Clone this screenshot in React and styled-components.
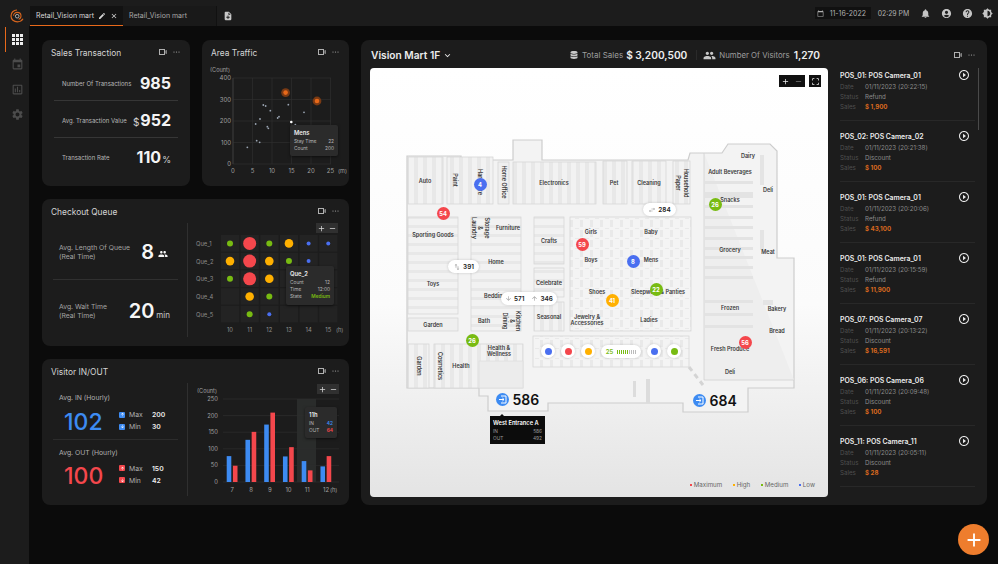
import React from "react";
import styled, { createGlobalStyle } from "styled-components";
import {
  MdAdd, MdRemove, MdClose, MdEdit, MdNoteAdd, MdEvent, MdOutlineAssessment, MdSettings,
  MdNotifications, MdAccountCircle, MdHelp, MdBrightness6, MdGroup, MdPlayCircleOutline,
  MdCropFree, MdKeyboardArrowDown, MdCalendarToday, MdArrowUpward, MdArrowDownward,
  MdSwapVert, MdSwapHoriz,
} from "react-icons/md";
import { FaDatabase } from "react-icons/fa";

const GlobalStyle = createGlobalStyle`
  html, body { margin: 0; padding: 0; background: #0b0b0b; }
  body { font-family: Inter, "Liberation Sans", sans-serif; color: #e8e8e8; overflow: hidden; }
`;

const ORANGE = "#e8691a";
const RED = "#f4474c";
const YELLOW = "#ffb000";
const GREEN = "#78bb12";
const BLUE = "#4a6ff0";
const SKY = "#3d8bf2";

/* ---------- shell ---------- */
const Page = styled.div`
  width: 998px;
  height: 564px;
  display: grid;
  grid-template-rows: 26px 1fr;
  grid-template-columns: 29px 1fr;
  position: relative;
  overflow: hidden;
`;

const TopBar = styled.header`
  grid-column: 1 / 3;
  background: #1c1c1c;
  display: flex;
  align-items: flex-end;
  padding-left: 10px;
`;

const LogoSlot = styled.div`
  width: 20px;
  height: 21px;
  display: flex;
  align-items: center;
`;

const Tab = styled.div`
  width: 93px;
  height: 20px;
  box-sizing: border-box;
  padding-left: 6px;
  display: flex;
  align-items: center;
  gap: 4px;
  font-size: 7px;
  color: ${(p) => (p.$active ? "#d8d8d8" : "#a8a8a8")};
  background: ${(p) => (p.$active ? "#121212" : "#191919")};
  border-bottom: 1px solid ${(p) => (p.$active ? ORANGE : "transparent")};
`;

const TabAdd = styled.div`
  width: 22px;
  height: 20px;
  border-left: 1px solid #111;
  display: flex;
  align-items: center;
  justify-content: center;
  color: #c8c8c8;
`;

const TopRight = styled.div`
  margin-left: auto;
  height: 26px;
  display: flex;
  align-items: center;
  color: #c4c4c4;
`;

const DateBox = styled.div`
  background: #111;
  height: 12px;
  width: 56px;
  display: flex;
  align-items: center;
  gap: 6px;
  padding-left: 2px;
  box-sizing: border-box;
  font-size: 7px;
  color: #b0b0b0;
  margin-right: 7px;
`;

const TimeText = styled.span`
  width: 31px;
  font-size: 6.9px;
  color: #b0b0b0;
  margin-right: 7px;
  white-space: nowrap;
`;

const TopIcon = styled.span`
  width: 20.6px;
  display: flex;
  justify-content: center;
`;

const SideBar = styled.nav`
  background: #1c1c1c;
  display: flex;
  flex-direction: column;
  padding-top: 1px;
`;

const SideItem = styled.div`
  width: 29px;
  height: 25px;
  box-sizing: border-box;
  padding-left: 6px;
  display: flex;
  align-items: center;
  justify-content: center;
  color: ${(p) => (p.$active ? "#e8e8e8" : "#4c4c4c")};
  position: relative;
  &::before {
    content: "";
    display: ${(p) => (p.$active ? "block" : "none")};
    position: absolute;
    left: 5px;
    top: 0;
    bottom: 0;
    width: 1px;
    background: ${ORANGE};
  }
`;

const Main = styled.main`
  display: grid;
  grid-template-columns: 307px 626px;
  gap: 12px;
  padding: 14px 0 0 13px;
  align-content: start;
`;

const LeftColumn = styled.div`
  display: grid;
  grid-template-rows: 146px 147px 146px;
  row-gap: 13px;
`;

const TopCards = styled.div`
  display: grid;
  grid-template-columns: 148px 147px;
  gap: 12px;
`;

const Card = styled.section`
  background: #1c1c1c;
  border-radius: 8px;
  min-width: 0;
  display: flex;
  flex-direction: column;
`;

const CardHead = styled.div`
  height: 24px;
  flex: none;
  box-sizing: border-box;
  padding: 1px 9px 0;
  display: flex;
  align-items: center;
  justify-content: space-between;
`;

const CardTitle = styled.h3`
  margin: 0;
  font-size: 8.4px;
  font-weight: 400;
  color: #d4d4d4;
`;

const CardTools = styled.div`
  display: flex;
  align-items: center;
  gap: 6px;
  margin: -1px 1px 0 0;
  color: #a8a8a8;
`;

const CamIcon = () => (
  <svg width="8" height="6" viewBox="0 0 8 6" fill="none">
    <rect x="0.5" y="0.5" width="5" height="5" stroke="#b0b0b0" />
    <path d="M6.5 1.5 L7.7 1 V5 L6.5 4.5 Z" fill="#b0b0b0" />
  </svg>
);

const Dots = () => (
  <svg width="7" height="2" viewBox="0 0 7 2">
    <circle cx="1" cy="1" r="0.6" fill="#b0b0b0" />
    <circle cx="3.5" cy="1" r="0.6" fill="#b0b0b0" />
    <circle cx="6" cy="1" r="0.6" fill="#b0b0b0" />
  </svg>
);

const Tools = () => (
  <CardTools>
    <CamIcon />
    <Dots />
  </CardTools>
);

/* ---------- sales transaction ---------- */
const SalesRow = styled.div`
  height: 37px;
  box-sizing: border-box;
  margin: 0 12px;
  padding: 2px 7px 0 8px;
  display: flex;
  align-items: center;
  justify-content: space-between;
  border-bottom: 1px solid ${(p) => (p.$last ? "transparent" : "#363636")};
`;

const SalesLabel = styled.span`
  font-size: 6px;
  color: #b8b8b8;
`;

const SalesValue = styled.span`
  font-size: 16px;
  font-weight: 700;
  color: #f4f4f4;
  display: flex;
  align-items: baseline;
  gap: 1px;
`;

const SalesUnit = styled.span`
  font-size: ${(p) => p.$size || 10}px;
  font-weight: 400;
  color: #d0d0d0;
`;

/* ---------- charts ---------- */
const ChartBox = styled.div`
  position: relative;
  flex: 1;
  min-height: 0;
  svg.chart { display: block; }
  svg.chart text { font-family: Inter, "Liberation Sans", sans-serif; }
`;

const Tip = styled.div`
  position: absolute;
  left: ${(p) => p.$x}px;
  top: ${(p) => p.$y}px;
  width: ${(p) => p.$w}px;
  box-sizing: border-box;
  padding: 4px;
  background: #2b2b2b;
  border-radius: 2px;
  box-shadow: 0 1px 3px rgba(0, 0, 0, 0.5);
`;

const TipTitle = styled.div`
  font-size: 5.8px;
  font-weight: 600;
  color: #eee;
  margin-bottom: 2px;
`;

const TipRow = styled.div`
  display: flex;
  justify-content: space-between;
  font-size: 4.8px;
  line-height: 7.2px;
  color: #b8b8b8;
`;

const TipValue = styled.span`
  color: ${(p) => p.$color || "#b8b8b8"};
  font-weight: ${(p) => (p.$color ? 600 : 400)};
`;

const ZoomCtl = styled.div`
  position: absolute;
  left: ${(p) => p.$x}px;
  top: ${(p) => p.$y}px;
  width: 22px;
  height: 10px;
  background: #303030;
  display: flex;
  align-items: center;
  justify-content: space-around;
  color: #d8d8d8;
`;

const AreaChart = () => {
  const pts = [
    [742, 442], [770, 422], [779, 427], [767, 372], [780, 357], [802, 380], [805, 385], [790, 315],
    [797, 318], [811, 332], [833, 354], [837, 350], [865, 314], [912, 337], [886, 374],
  ];
  const xs = [0, 5, 10, 15, 20, 25];
  const ys = [0, 100, 200, 300, 400];
  const px = (v) => 233 + (v / 25) * 97.5;
  const py = (v) => 164 - (v / 400) * 86;
  return (
    <ChartBox>
      <svg className="chart" width="147" height="122" viewBox="202 64 147 122">
        {xs.map((v) => (
          <line key={v} x1={px(v)} x2={px(v)} y1="78" y2="164" stroke="#2e2e2e" strokeWidth="0.7" />
        ))}
        {ys.map((v) => (
          <line key={v} x1="233" x2="331" y1={py(v)} y2={py(v)} stroke="#2e2e2e" strokeWidth="0.7" />
        ))}
        <line x1="233" x2="233" y1="78" y2="164" stroke="#444" strokeWidth="0.7" />
        {ys.map((v) => (
          <text key={v} x="231" y={py(v) + 2} fontSize="6" fill="#a0a0a0" textAnchor="end">{v}</text>
        ))}
        {xs.map((v) => (
          <text key={v} x={px(v)} y="172.5" fontSize="6" fill="#a0a0a0" textAnchor="middle">{v}</text>
        ))}
        <text x="338" y="172.5" fontSize="5.6" fill="#a0a0a0">(m)</text>
        <text x="210" y="72" fontSize="5.6" fill="#a0a0a0">(Count)</text>
        {pts.map(([x, y], i) => (
          <circle key={i} cx={x / 3} cy={y / 3} r="0.9" fill="#9aa4b2" />
        ))}
        <circle cx="291.3" cy="122" r="1.3" fill="#fff" />
        <circle cx="285.6" cy="92.6" r="4.4" fill="#7a3a14" />
        <circle cx="285.6" cy="92.6" r="2.3" fill={ORANGE} />
        <circle cx="317" cy="101" r="4.4" fill="#7a3a14" />
        <circle cx="317" cy="101" r="2.3" fill={ORANGE} />
      </svg>
      <Tip $x={88} $y={61} $w={48}>
        <TipTitle>Mens</TipTitle>
        <TipRow><span>Stay Time</span><TipValue>22</TipValue></TipRow>
        <TipRow><span>Count</span><TipValue>200</TipValue></TipRow>
      </Tip>
    </ChartBox>
  );
};

const HEAT = [
  [["g", 3], ["r", 6.5], ["g", 3], ["y", 4.3], ["b", 2], ["b", 2]],
  [["y", 4.3], ["r", 6.5], ["y", 4.3], ["g", 3], ["b", 2], null],
  [["g", 3], ["r", 6.5], ["y", 4.3], null, null, null],
  [null, ["y", 4.3], ["g", 3], null, null, null],
  [null, ["g", 3], ["b", 2], null, null, null],
];
const HEAT_COL = { g: GREEN, r: RED, y: YELLOW, b: BLUE };

const HeatChart = () => (
  <ChartBox>
    <svg className="chart" width="160" height="113" viewBox="189 224 160 113">
      {HEAT.map((row, r) => (
        <g key={r}>
          <text x="197" y={247 + r * 17.7} fontSize="5.8" fill="#8c8c8c">Que_{r + 1}</text>
          {row.map((cell, c) => {
            const x = 222 + c * 19.65;
            const y = 236 + r * 17.7;
            return (
              <g key={c}>
                <rect x={x} y={y} width="18.2" height="16.6" fill="#232323" />
                {cell && <circle cx={x + 9} cy={y + 8.4} r={cell[1]} fill={HEAT_COL[cell[0]]} />}
              </g>
            );
          })}
        </g>
      ))}
      {[10, 11, 12, 13, 14, 15].map((h, i) => (
        <text key={h} x={231 + i * 19.65} y="332.5" fontSize="5.8" fill="#909090" textAnchor="middle">{h}</text>
      ))}
      <text x="337" y="332.5" fontSize="5.6" fill="#909090">(h)</text>
    </svg>
    <ZoomCtl $x={128} $y={0}>
      <MdAdd size={9} />
      <MdRemove size={9} />
    </ZoomCtl>
    <Tip $x={98} $y={43} $w={48}>
      <TipTitle>Que_2</TipTitle>
      <TipRow><span>Count</span><TipValue>12</TipValue></TipRow>
      <TipRow><span>Time</span><TipValue>12:00</TipValue></TipRow>
      <TipRow><span>State</span><TipValue $color={GREEN}>Medium</TipValue></TipRow>
    </Tip>
  </ChartBox>
);

const VISITS = [
  { h: 7, i: 78, o: 49 }, { h: 8, i: 127, o: 151 }, { h: 9, i: 173, o: 209 },
  { h: 10, i: 77, o: 105 }, { h: 11, i: 63, o: 35 }, { h: 12, i: 47, o: 78 },
];

const BarChart = () => {
  const base = 482;
  const k = 83 / 250;
  return (
    <ChartBox>
      <svg className="chart" width="160" height="114" viewBox="189 383 160 114">
        <rect x="298" y="399" width="19" height="83" fill="#2a2c2b" />
        {[0, 50, 100, 150, 200, 250].map((v) => (
          <g key={v}>
            <line x1="224" x2="340" y1={base - v * k} y2={base - v * k} stroke="#2e2e2e" strokeWidth="0.7" />
            <text x="219" y={base - v * k + 2} fontSize="5.8" fill="#a0a0a0" textAnchor="end">{v}</text>
          </g>
        ))}
        {VISITS.map((d, n) => {
          const cx = 233.3 + n * 18.75;
          return (
            <g key={d.h}>
              <rect x={cx - 5.6} y={base - d.i * k} width="4.6" height={d.i * k} fill={SKY} />
              <rect x={cx + 0.6} y={base - d.o * k} width="4.6" height={d.o * k} fill={RED} />
              <text x={cx} y="491.5" fontSize="6" fill="#a0a0a0" textAnchor="middle">{d.h}</text>
            </g>
          );
        })}
        <text x="331" y="491.5" fontSize="5.6" fill="#a0a0a0">(h)</text>
        <text x="198" y="393" fontSize="5.6" fill="#a0a0a0">(Count)</text>
      </svg>
      <ZoomCtl $x={129} $y={1}>
        <MdAdd size={9} />
        <MdRemove size={9} />
      </ZoomCtl>
      <Tip $x={117} $y={24} $w={32}>
        <TipTitle>11h</TipTitle>
        <TipRow><span>IN</span><TipValue $color={SKY}>42</TipValue></TipRow>
        <TipRow><span>OUT</span><TipValue $color={RED}>64</TipValue></TipRow>
      </Tip>
    </ChartBox>
  );
};

/* ---------- split cards ---------- */
const SplitBody = styled.div`
  flex: 1;
  min-height: 0;
  margin-bottom: 9px;
  display: grid;
  grid-template-columns: 146px 1fr;
`;

const SplitLeft = styled.div`
  display: grid;
  grid-template-rows: 1fr 1fr;
  border-right: 1px solid #2f2f2f;
`;

const QueueRow = styled.div`
  margin: 0 9px 0 11px;
  padding: ${(p) => (p.$last ? "5px 0 0 6px" : "1px 0 0 6px")};
  padding-right: 8px;
  display: flex;
  align-items: center;
  justify-content: space-between;
  border-bottom: 1px solid ${(p) => (p.$last ? "transparent" : "#303030")};
`;

const QueueLabel = styled.div`
  font-size: 6.8px;
  line-height: 9px;
  color: #a4a4a4;
`;

const QueueValue = styled.div`
  display: flex;
  align-items: baseline;
  gap: 2px;
  font-size: 20px;
  font-weight: 600;
  color: #f6f6f6;
`;

const QueueUnit = styled.span`
  font-size: 8px;
  font-weight: 400;
  color: #c8c8c8;
`;

const QueueIcon = styled.span`
  display: flex;
  margin: 0 2px 0 2px;
`;

const VisitorBlock = styled.div`
  margin: 0 9px 0 11px;
  padding: ${(p) => (p.$last ? "8px" : "10px")} 0 0 6px;
  border-bottom: 1px solid ${(p) => (p.$last ? "transparent" : "#2c2c2c")};
`;

const VisitorLabel = styled.div`
  font-size: 6.8px;
  color: #b0b0b0;
`;

const VisitorRow = styled.div`
  display: grid;
  grid-template-columns: 60px 1fr;
  align-items: center;
  margin-top: ${(p) => (p.$tight ? 5 : 6)}px;
`;

const VisitorValue = styled.div`
  font-size: 23px;
  font-weight: 500;
  padding-left: 5px;
  color: ${(p) => p.$color};
`;

const MaxMin = styled.div`
  display: grid;
  grid-template-columns: 33px auto;
  row-gap: 3px;
  align-items: center;
  margin-bottom: 3px;
`;

const MaxMinKey = styled.div`
  display: flex;
  align-items: center;
  gap: 4px;
  font-size: 6.8px;
  color: #b0b0b0;
`;

const Badge = styled.span`
  width: 6px;
  height: 6px;
  border-radius: 1px;
  background: ${(p) => p.$color};
  display: flex;
  align-items: center;
  justify-content: center;
  color: #fff;
`;

const MaxMinValue = styled.div`
  font-size: 6.8px;
  font-weight: 600;
  color: #ececec;
`;

/* ---------- main panel ---------- */
const Panel = styled.section`
  background: #1c1c1c;
  border-radius: 8px;
  height: 465px;
  display: flex;
  flex-direction: column;
`;

const PanelHead = styled.div`
  height: 28px;
  box-sizing: border-box;
  padding: 2px 11px 0 10px;
  display: flex;
  align-items: center;
`;

const PanelTitle = styled.h2`
  margin: 0;
  font-size: 10.2px;
  font-weight: 600;
  color: #ececec;
  display: flex;
  align-items: center;
  gap: 2px;
  width: 199px;
`;

const StatGroup = styled.div`
  display: flex;
  align-items: center;
  gap: ${(p) => p.$gap || 4}px;
  color: #c8c8c8;
`;

const StatDivider = styled.span`
  width: 1px;
  height: 10px;
  background: #2a2a2a;
  margin: 0 6px 0 9px;
`;

const StatLabel = styled.span`
  font-size: ${(p) => p.$size || 8}px;
  color: #9c9c9c;
`;

const StatValue = styled.span`
  font-size: 10.2px;
  font-weight: 600;
  color: #eee;
  margin-left: ${(p) => (p.$near ? -1 : 1)}px;
`;

const PanelTools = styled.div`
  margin-left: auto;
`;

const PanelBody = styled.div`
  flex: 1;
  min-height: 0;
  display: grid;
  grid-template-columns: 458px 135px;
  column-gap: 12px;
  padding: 0 0 8px 9px;
  position: relative;
`;

const MapBox = styled.div`
  position: relative;
  border-radius: 4px;
  overflow: hidden;
  background: linear-gradient(180deg, #ffffff 0%, #fbfbfb 55%, #e4e4e4 100%);
  svg.plan { display: block; }
  svg.plan text { font-family: Inter, "Liberation Sans", sans-serif; font-weight: 600; }
`;

const MapCtl = styled.div`
  position: absolute;
  top: 7px;
  left: ${(p) => p.$x}px;
  width: ${(p) => p.$w}px;
  height: 12px;
  background: #111;
  display: flex;
  align-items: center;
  justify-content: space-around;
  color: #eee;
`;

const Pin = styled.div`
  position: absolute;
  left: ${(p) => p.$x - 370 - 6.5}px;
  top: ${(p) => p.$y - 68 - 6.5}px;
  width: 13px;
  height: 13px;
  border-radius: 50%;
  background: ${(p) => p.$color};
  color: #fff;
  font-size: 5.8px;
  font-weight: 700;
  display: flex;
  align-items: center;
  justify-content: center;
`;

const Chip = styled.div`
  position: absolute;
  left: ${(p) => p.$x - 370}px;
  top: ${(p) => p.$y - 68}px;
  width: ${(p) => p.$w}px;
  height: 13px;
  box-sizing: border-box;
  border-radius: 7px;
  background: #fff;
  box-shadow: 0 0 3px rgba(0, 0, 0, 0.18);
  display: flex;
  align-items: center;
  justify-content: center;
  gap: 2px;
  font-size: 6.4px;
  font-weight: 600;
  color: #222;
  white-space: nowrap;
`;

const ChipGap = styled.span`
  width: 3px;
`;

const ChipGreen = styled.span`
  color: ${GREEN};
  font-size: 6px;
  font-weight: 600;
`;

const Ticks = styled.span`
  display: flex;
  gap: 1px;
  margin-left: 2px;
`;

const TickMark = styled.i`
  width: 1px;
  height: 4px;
  background: ${(p) => (p.$on ? GREEN : "#bbb")};
`;

const DotPin = styled.div`
  position: absolute;
  left: ${(p) => p.$x - 370 - 7}px;
  top: 276px;
  width: 14px;
  height: 14px;
  border-radius: 50%;
  background: #fff;
  box-shadow: 0 0 3px rgba(0, 0, 0, 0.18);
  display: flex;
  align-items: center;
  justify-content: center;
  &::after {
    content: "";
    width: 7px;
    height: 7px;
    border-radius: 50%;
    background: ${(p) => p.$color};
  }
`;

const Entrance = styled.div`
  position: absolute;
  left: ${(p) => p.$x - 370}px;
  top: ${(p) => p.$y - 68}px;
  display: flex;
  align-items: center;
  gap: 4px;
  font-size: 14px;
  font-weight: 600;
  color: #111;
`;

const EntranceIcon = styled.span`
  width: 13px;
  height: 13px;
  border-radius: 50%;
  background: ${SKY};
  display: flex;
  align-items: center;
  justify-content: center;
`;

const MapTip = styled.div`
  position: absolute;
  left: 120px;
  top: 348px;
  width: 55px;
  height: 28px;
  box-sizing: border-box;
  padding: 3px;
  background: #0c0c0c;
  &::before {
    content: "";
    position: absolute;
    left: 10px;
    top: -2px;
    border-left: 2px solid transparent;
    border-right: 2px solid transparent;
    border-bottom: 2px solid #0c0c0c;
  }
`;

const MapTipTitle = styled.div`
  font-size: 5.7px;
  font-weight: 600;
  color: #fff;
  margin-bottom: 2px;
`;

const MapTipRow = styled.div`
  display: flex;
  justify-content: space-between;
  font-size: 4.8px;
  line-height: 7px;
  color: #9a9a9a;
`;

const Legend = styled.div`
  position: absolute;
  right: 13px;
  bottom: 9px;
  display: flex;
  gap: 10.5px;
  font-size: 6.2px;
  color: #666;
`;

const LegendItem = styled.span`
  display: flex;
  align-items: center;
  gap: 2px;
  &::before {
    content: "";
    width: 2px;
    height: 2px;
    background: ${(p) => p.$color};
  }
`;

/* ---------- POS list ---------- */
const PosList = styled.div`
  overflow: hidden;
  height: 429px;
`;

const PosItem = styled.article`
  height: 61px;
  box-sizing: border-box;
  border-bottom: 1px solid #282828;
  padding-top: 9px;
  &:first-child {
    height: 53px;
    padding-top: 1px;
  }
`;

const PosTitle = styled.div`
  height: 12px;
  display: flex;
  align-items: center;
  justify-content: space-between;
  font-size: 6.9px;
  font-weight: 600;
  color: #ececec;
  padding-right: 5px;
`;

const PosRow = styled.div`
  display: grid;
  grid-template-columns: 25px 1fr;
  font-size: 6.2px;
  line-height: 10px;
  color: #4f4f4f;
  margin-top: ${(p) => (p.$first ? 1 : 0)}px;
`;

const PosValue = styled.span`
  color: ${(p) => (p.$sales ? "#d9691f" : "#8c8c8c")};
  font-weight: ${(p) => (p.$sales ? 700 : 400)};
`;

const ScrollThumb = styled.div`
  position: absolute;
  left: 617px;
  top: 0;
  width: 1px;
  height: 62px;
  background: #4a4a4a;
`;

const Fab = styled.button`
  position: absolute;
  left: 958px;
  top: 524px;
  width: 31px;
  height: 31px;
  border: 0;
  padding: 0;
  border-radius: 50%;
  background: #ee7d2d;
  color: #fff;
  display: flex;
  align-items: center;
  justify-content: center;
`;

const Label = ({ x, y, t, rot, s = 5.5 }) => (
  <text
    x={x}
    y={y}
    fontSize={s}
    fill="#3a3a3a"
    textAnchor="middle"
    dominantBaseline="middle"
    transform={rot ? `rotate(90 ${x} ${y})` : undefined}
  >
    {t}
  </text>
);

const DEPTS = [
  [408, 157, 35, 47, "v"], [447, 157, 46, 47, "v"], [498, 162, 11, 42, "n"], [513, 162, 83, 42, "v"],
  [603, 161, 24, 43, "v"], [632, 161, 34, 43, "v"], [673, 161, 17, 43, "v"],
  [408, 217, 50, 97, "h"], [408, 318, 50, 13, "n"], [471, 217, 50, 114, "h"],
  [534, 217, 30, 47, "h"], [534, 268, 30, 29, "h"], [534, 302, 30, 29, "v"],
  [570, 217, 121, 114, "d"], [533, 336, 156, 31, "d"],
  [434, 344, 89, 44, "v"], [408, 344, 21, 44, "v"],
];

const LABELS = [
  [425, 181, "Auto"], [454, 180, "Paint", 1], [479, 182, "Hardware", 1], [503, 182, "Home Office", 1],
  [554, 183, "Electronics"], [614, 183, "Pet"], [649, 183, "Cleaning"], [685, 183, "Household", 1],
  [677, 183, "Paper", 1], [748, 156, "Dairy"], [730, 172, "Adult Beverages"], [768, 190, "Deli"],
  [730, 200, "Snacks"], [730, 250, "Grocery"], [768, 252, "Meat"], [651, 232, "Baby"], [651, 260, "Mens"],
  [658, 292, "Sleepwear & Panties"], [591, 232, "Girls"], [591, 260, "Boys"], [597, 292, "Shoes"],
  [587, 317, "Jewelry &"], [587, 323, "Accessories"], [649, 320, "Ladies"], [730, 308, "Frozen"],
  [777, 309, "Bakery"], [777, 331, "Bread"], [730, 349, "Fresh Produce"], [730, 372, "Deli"],
  [433, 235, "Sporting Goods"], [508, 228, "Furniture"], [486, 228, "Storage", 1], [479, 228, "&", 1],
  [473, 228, "Laundry", 1], [549, 241, "Crafts"], [496, 262, "Home"], [433, 284, "Toys"], [549, 283, "Celebrate"],
  [495, 296, "Bedding"], [549, 317, "Seasonal"], [484, 321, "Bath"], [504, 321, "Dining", 1], [511, 321, "&", 1],
  [517, 321, "Kitchen", 1], [433, 325, "Garden"], [418, 366, "Garden", 1], [439, 366, "Cosmetics", 1],
  [461, 366, "Health"], [499, 348, "Health &"], [499, 354, "Wellness"],
];

const FloorPlan = () => (
  <svg className="plan" width="458" height="429" viewBox="370 68 458 429">
    <defs>
      <pattern id="stripeV" width="9" height="9" patternUnits="userSpaceOnUse">
        <rect width="9" height="9" fill="#f2f2f2" />
        <rect width="4" height="9" fill="#e8e8e8" />
      </pattern>
      <pattern id="stripeH" width="9" height="9" patternUnits="userSpaceOnUse">
        <rect width="9" height="9" fill="#f2f2f2" />
        <rect width="9" height="3" fill="#e8e8e8" />
      </pattern>
      <pattern id="stripeD" width="10" height="10" patternUnits="userSpaceOnUse">
        <rect width="10" height="10" fill="#f4f4f4" />
        <rect width="3" height="7" fill="#e9e9e9" />
        <rect x="5" y="8" width="4" height="1" fill="#e9e9e9" />
      </pattern>
    </defs>
    <path
      d="M407 156 H461 V160 H513 V140 H542 V160 H688 L690 153 H722 L728 144 H770 L777 151 V258 H794 V388 H748 V412 H683 V403 H548 V411 H488 V396 H479 V388 H407 Z"
      fill="#f3f3f3"
      stroke="#cdcdcd"
      strokeWidth="1.2"
    />
    {DEPTS.map(([x, y, w, h, k], i) => (
      <rect
        key={i}
        x={x}
        y={y}
        width={w}
        height={h}
        fill={k === "v" ? "url(#stripeV)" : k === "h" ? "url(#stripeH)" : k === "d" ? "url(#stripeD)" : "#efefef"}
        stroke="#d6d6d6"
        strokeWidth="0.8"
      />
    ))}
    <path d="M704 153 V380 H794" fill="#eeeeee" stroke="#d0d0d0" strokeWidth="0.8" />
    {[181, 192, 205, 216, 226, 237, 247, 256, 266, 276, 300, 313, 325].map((y) => (
      <rect key={y} x="705" y={y} width="48" height={y === 192 ? 6 : 3} fill="#e3e3e3" />
    ))}
    <rect x="760" y="155" width="4" height="30" fill="#e4e4e4" />
    <rect x="760" y="230" width="4" height="20" fill="#e4e4e4" />
    <rect x="763" y="300" width="10" height="5" fill="#e4e4e4" />
    <rect x="479" y="361" width="44" height="27" fill="#ececec" stroke="#dadada" strokeWidth="0.6" />
    <path d="M689 367 L703 385" stroke="#d4d4d4" strokeWidth="3" strokeDasharray="5 4" />
    <rect x="633" y="381" width="3" height="16" fill="#dcdcdc" />
    <rect x="646" y="379" width="4" height="24" fill="#dcdcdc" />
    {LABELS.map(([x, y, t, r], i) => (
      <Label key={i} x={x} y={y} t={t} rot={r} />
    ))}
  </svg>
);

const EnterGlyph = () => (
  <svg width="9" height="9" viewBox="0 0 9 9" fill="none" stroke="#fff" strokeWidth="1">
    <path d="M3 1 H8 V8 H3" />
    <path d="M1 4.5 H6 M4.4 3 L6 4.5 L4.4 6" />
  </svg>
);

const LogoMark = () => (
  <svg width="14" height="14" viewBox="0 0 14 14" fill="none">
    <path d="M7 1 C3.5 1 1 3.6 1 7 C1 10.4 4 12.8 7.4 12.8 C10 12.8 12 11.6 13 9.8" stroke="#d8651e" strokeWidth="1.2" />
    <path d="M3.6 6.8 C3.6 4.8 5.2 3.4 7.2 3.4 C9.4 3.4 11 5 11 7 C11 8.6 10 9.8 8.6 10.2" stroke="#d8651e" strokeWidth="1.1" />
    <circle cx="7.2" cy="7.2" r="1.8" stroke="#bdbdbd" strokeWidth="0.9" />
  </svg>
);

const GridIcon = () => (
  <svg width="11" height="11" viewBox="0 0 11 11" fill="#eee">
    {[0, 4, 8].map((x) =>
      [0, 4, 8].map((y) => <rect key={`${x}${y}`} x={x} y={y} width="3" height="3" />)
    )}
  </svg>
);

const POS = [
  ["POS_01: POS Camera_01", "20:22:15", "Refund", "$ 1,900"],
  ["POS_02: POS Camera_02", "20:21:38", "Discount", "$ 100"],
  ["POS_01: POS Camera_01", "20:20:06", "Refund", "$ 43,100"],
  ["POS_01: POS Camera_01", "20:15:59", "Refund", "$ 11,900"],
  ["POS_07: POS Camera_07", "20:13:22", "Discount", "$ 16,591"],
  ["POS_06: POS Camera_06", "20:09:48", "Discount", "$ 100"],
  ["POS_11: POS Camera_11", "20:05:11", "Discount", "$ 28"],
];

export default function App() {
  return (
    <Page>
      <GlobalStyle />
      <TopBar>
        <LogoSlot><LogoMark /></LogoSlot>
        <Tab $active>
          Retail_Vision mart
          <MdEdit size={8} />
          <MdClose size={8} />
        </Tab>
        <Tab>Retail_Vision mart</Tab>
        <TabAdd>
          <MdNoteAdd size={10} />
        </TabAdd>
        <TopRight>
          <DateBox>
            <MdCalendarToday size={7} />
            11-16-2022
          </DateBox>
          <TimeText>02:29 PM</TimeText>
          <TopIcon><MdNotifications size={11} /></TopIcon>
          <TopIcon><MdAccountCircle size={11} /></TopIcon>
          <TopIcon><MdHelp size={11} /></TopIcon>
          <TopIcon><MdBrightness6 size={11} /></TopIcon>
        </TopRight>
      </TopBar>

      <SideBar>
        <SideItem $active><GridIcon /></SideItem>
        <SideItem><MdEvent size={13} /></SideItem>
        <SideItem><MdOutlineAssessment size={13} /></SideItem>
        <SideItem><MdSettings size={13} /></SideItem>
      </SideBar>

      <Main>
        <LeftColumn>
          <TopCards>
            <Card>
              <CardHead>
                <CardTitle>Sales Transaction</CardTitle>
                <Tools />
              </CardHead>
              <SalesRow>
                <SalesLabel>Number Of Transactions</SalesLabel>
                <SalesValue>985</SalesValue>
              </SalesRow>
              <SalesRow>
                <SalesLabel>Avg. Transaction Value</SalesLabel>
                <SalesValue><SalesUnit>$</SalesUnit>952</SalesValue>
              </SalesRow>
              <SalesRow $last>
                <SalesLabel>Transaction Rate</SalesLabel>
                <SalesValue>110<SalesUnit $size={9}>%</SalesUnit></SalesValue>
              </SalesRow>
            </Card>
            <Card>
              <CardHead>
                <CardTitle>Area Traffic</CardTitle>
                <Tools />
              </CardHead>
              <AreaChart />
            </Card>
          </TopCards>

          <Card>
            <CardHead>
              <CardTitle>Checkout Queue</CardTitle>
              <Tools />
            </CardHead>
            <SplitBody>
              <SplitLeft>
                <QueueRow>
                  <QueueLabel>Avg. Length Of Queue<br />(Real Time)</QueueLabel>
                  <QueueValue>8<QueueIcon><MdGroup size={10} /></QueueIcon></QueueValue>
                </QueueRow>
                <QueueRow $last>
                  <QueueLabel>Avg. Wait Time<br />(Real Time)</QueueLabel>
                  <QueueValue>20<QueueUnit>min</QueueUnit></QueueValue>
                </QueueRow>
              </SplitLeft>
              <HeatChart />
            </SplitBody>
          </Card>

          <Card>
            <CardHead>
              <CardTitle>Visitor IN/OUT</CardTitle>
              <Tools />
            </CardHead>
            <SplitBody>
              <SplitLeft>
                <VisitorBlock>
                  <VisitorLabel>Avg. IN (Hourly)</VisitorLabel>
                  <VisitorRow>
                    <VisitorValue $color={SKY}>102</VisitorValue>
                    <MaxMin>
                      <MaxMinKey><Badge $color={SKY}><MdArrowUpward size={5} /></Badge>Max</MaxMinKey>
                      <MaxMinValue>200</MaxMinValue>
                      <MaxMinKey><Badge $color={SKY}><MdArrowDownward size={5} /></Badge>Min</MaxMinKey>
                      <MaxMinValue>30</MaxMinValue>
                    </MaxMin>
                  </VisitorRow>
                </VisitorBlock>
                <VisitorBlock $last>
                  <VisitorLabel>Avg. OUT (Hourly)</VisitorLabel>
                  <VisitorRow $tight>
                    <VisitorValue $color={RED}>100</VisitorValue>
                    <MaxMin>
                      <MaxMinKey><Badge $color={RED}><MdArrowUpward size={5} /></Badge>Max</MaxMinKey>
                      <MaxMinValue>150</MaxMinValue>
                      <MaxMinKey><Badge $color={RED}><MdArrowDownward size={5} /></Badge>Min</MaxMinKey>
                      <MaxMinValue>42</MaxMinValue>
                    </MaxMin>
                  </VisitorRow>
                </VisitorBlock>
              </SplitLeft>
              <BarChart />
            </SplitBody>
          </Card>
        </LeftColumn>

        <Panel>
          <PanelHead>
            <PanelTitle>Vision Mart 1F<MdKeyboardArrowDown size={11} /></PanelTitle>
            <StatGroup>
              <FaDatabase size={8} />
              <StatLabel>Total Sales</StatLabel>
              <StatValue $near>$ 3,200,500</StatValue>
            </StatGroup>
            <StatDivider />
            <StatGroup $gap={3}>
              <MdGroup size={13} />
              <StatLabel $size={7.8}>Number Of Visitors</StatLabel>
              <StatValue>1,270</StatValue>
            </StatGroup>
            <PanelTools><Tools /></PanelTools>
          </PanelHead>
          <PanelBody>
            <MapBox>
              <FloorPlan />
              <MapCtl $x={409} $w={26}><MdAdd size={9} /><MdRemove size={9} color="#777" /></MapCtl>
              <MapCtl $x={439} $w={12}><MdCropFree size={9} /></MapCtl>

              <Pin $x={443} $y={213} $color={RED}>54</Pin>
              <Pin $x={480} $y={184} $color={BLUE}>4</Pin>
              <Pin $x={582} $y={244} $color={RED}>59</Pin>
              <Pin $x={612} $y={300} $color={YELLOW}>41</Pin>
              <Pin $x={633} $y={261} $color={BLUE}>8</Pin>
              <Pin $x={656} $y={289} $color={GREEN}>22</Pin>
              <Pin $x={715} $y={204} $color={GREEN}>26</Pin>
              <Pin $x={745} $y={342} $color={RED}>56</Pin>
              <Pin $x={472} $y={340} $color={GREEN}>26</Pin>

              <Chip $x={448} $y={260} $w={31}><MdSwapVert size={8} color="#999" />391</Chip>
              <Chip $x={501} $y={292} $w={56}>
                <MdArrowDownward size={7} color="#999" />571
                <ChipGap />
                <MdArrowUpward size={7} color="#999" />346
              </Chip>
              <Chip $x={643} $y={203} $w={33}><MdSwapHoriz size={8} color="#999" />284</Chip>

              <DotPin $x={548} $color={BLUE} />
              <DotPin $x={568} $color={RED} />
              <DotPin $x={588} $color={YELLOW} />
              <Chip $x={601} $y={345} $w={40}>
                <ChipGreen>25</ChipGreen>
                <Ticks>
                  {Array.from({ length: 10 }, (_, i) => <TickMark key={i} $on={i < 6} />)}
                </Ticks>
              </Chip>
              <DotPin $x={654} $color={BLUE} />
              <DotPin $x={674} $color={GREEN} />

              <Entrance $x={495.5} $y={391}>
                <EntranceIcon><EnterGlyph /></EntranceIcon>586
              </Entrance>
              <Entrance $x={692.5} $y={392}>
                <EntranceIcon><EnterGlyph /></EntranceIcon>684
              </Entrance>

              <MapTip>
                <MapTipTitle>West Entrance A</MapTipTitle>
                <MapTipRow><span>IN</span><span>586</span></MapTipRow>
                <MapTipRow><span>OUT</span><span>492</span></MapTipRow>
              </MapTip>

              <Legend>
                <LegendItem $color={RED}>Maximum</LegendItem>
                <LegendItem $color={YELLOW}>High</LegendItem>
                <LegendItem $color={GREEN}>Medium</LegendItem>
                <LegendItem $color={BLUE}>Low</LegendItem>
              </Legend>
            </MapBox>

            <PosList>
              {POS.map(([title, time, status, sales], i) => (
                <PosItem key={i}>
                  <PosTitle>
                    {title}
                    <MdPlayCircleOutline size={12} color="#e8e8e8" />
                  </PosTitle>
                  <PosRow $first><span>Date</span><PosValue>01/11/2023 ({time})</PosValue></PosRow>
                  <PosRow><span>Status</span><PosValue>{status}</PosValue></PosRow>
                  <PosRow><span>Sales</span><PosValue $sales>{sales}</PosValue></PosRow>
                </PosItem>
              ))}
            </PosList>
            <ScrollThumb />
          </PanelBody>
        </Panel>
      </Main>

      <Fab aria-label="Add"><MdAdd size={22} /></Fab>
    </Page>
  );
}
